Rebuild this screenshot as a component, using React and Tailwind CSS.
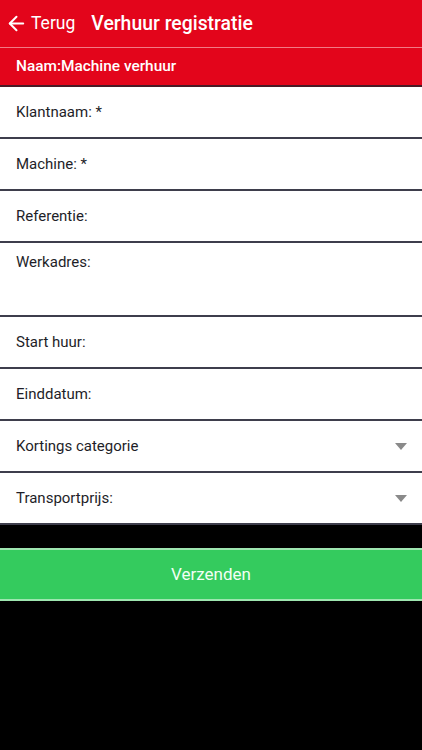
import { ArrowLeft } from "lucide-react";

const rows = [
  { label: "Klantnaam: *" },
  { label: "Machine: *" },
  { label: "Referentie:" },
  { label: "Werkadres:", tall: true },
  { label: "Start huur:" },
  { label: "Einddatum:" },
  { label: "Kortings categorie", select: true },
  { label: "Transportprijs:", select: true },
];

export default function App() {
  return (
    <div className="min-h-[750px] w-[422px] bg-black font-['Roboto',sans-serif]">
      <div className="flex h-[47px] items-center bg-[#e3051b] pl-[5px] text-white">
        <ArrowLeft size={23} strokeWidth={2.1} />
        <span className="ml-[3px] text-[17.5px]">Terug</span>
        <span className="ml-[16px] text-[19.4px] font-medium">Verhuur registratie</span>
      </div>
      <div className="h-px bg-[#f27a85]" />
      <div className="flex h-[39px] items-center border-b-2 border-[#4a1a26] bg-[#e3051b] px-[16px] text-[15.4px] font-medium text-white">
        Naam:Machine verhuur
      </div>

      <div className="bg-white">
        {rows.map(row => (
          <div
            key={row.label}
            className={`flex border-b-2 border-[#3e3e4c] px-[16px] text-[15px] text-[#1e1e28] ${row.tall ? "h-[74px] items-start pt-[8px]" : "h-[52px] items-center"}`}
          >
            <span className="flex-1">{row.label}</span>
            {row.select && (
              <svg width="12" height="7" viewBox="0 0 12 7" className="mr-[-1px]">
                <path d="M0 0h12L6 7z" fill="#8a8a8a" />
              </svg>
            )}
          </div>
        ))}
      </div>

      <div className="h-[23px] bg-black" />
      <div className="flex h-[53px] items-center justify-center border-y-2 border-[#9ee6b0] bg-[#34cb5e] text-[17px] text-[#f2fff4]">
        Verzenden
      </div>
    </div>
  );
}
